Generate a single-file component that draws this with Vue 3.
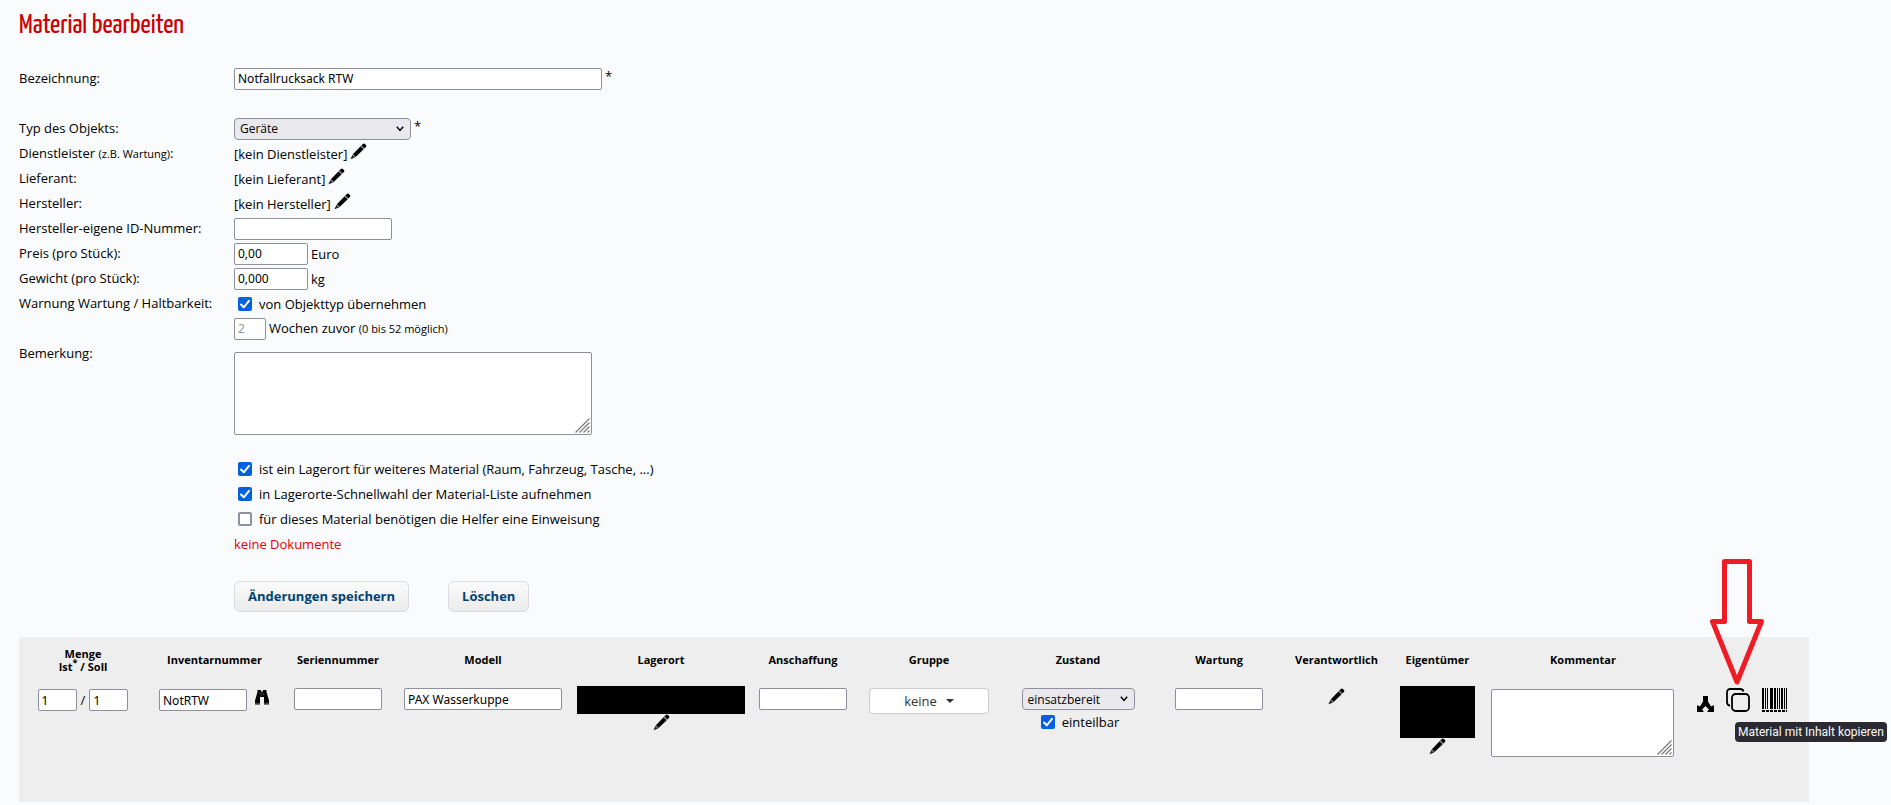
<script setup>
import { h, reactive } from 'vue'

const form = reactive({
  name: 'Notfallrucksack RTW',
  type: 'Geräte',
  manufacturerId: '',
  price: '0,00',
  weight: '0,000',
  inheritWarning: true,
  weeks: '2',
  remark: '',
  isStorage: true,
  quickSelect: true,
  needsBriefing: false
})

const item = reactive({
  actual: '1',
  target: '1',
  inventory: 'NotRTW',
  serial: '',
  model: 'PAX Wasserkuppe',
  purchase: '',
  state: 'einsatzbereit',
  assignable: true,
  maintenance: '',
  comment: ''
})

const columns = [
  { key: 'qty', label: 'Menge', width: 128 },
  { key: 'inv', label: 'Inventarnummer', width: 135 },
  { key: 'ser', label: 'Seriennummer', width: 112 },
  { key: 'mod', label: 'Modell', width: 178 },
  { key: 'loc', label: 'Lagerort', width: 178 },
  { key: 'buy', label: 'Anschaffung', width: 106 },
  { key: 'grp', label: 'Gruppe', width: 146 },
  { key: 'sta', label: 'Zustand', width: 152 },
  { key: 'mnt', label: 'Wartung', width: 130 },
  { key: 'rsp', label: 'Verantwortlich', width: 105 },
  { key: 'own', label: 'Eigentümer', width: 97 },
  { key: 'com', label: 'Kommentar', width: 194 },
  { key: 'act', label: '', width: 129 }
]
const total = columns.reduce((sum, c) => sum + c.width, 0)
const share = (c) => ({ width: (c.width / total) * 100 + '%' })

const Pencil = () =>
  h('svg', { width: 17, height: 17, viewBox: '0 0 17 17', 'aria-hidden': 'true' }, [
    h('path', { d: 'M11.2 2.6 13.2 0.8Q14 0.2 14.8 0.9L16 2.1Q16.8 3 16.1 3.7L14.4 5.6Z', fill: '#000' }),
    h('path', { d: 'M10.6 3.2 13.7 6.3 5.6 14 2.9 11.3Z', fill: '#000' }),
    h('path', { d: 'M2.4 11.9 5 14.5 1.2 16.1Q0.3 16.4 0.7 15.5Z', fill: '#222' }),
    h('path', { d: 'M11 2.8 14.1 5.9M2.6 11.6 5.3 14.2', stroke: '#777', 'stroke-width': 0.8 })
  ])

const Grip = () =>
  h('svg', { class: 'grip', width: 15, height: 15, viewBox: '0 0 15 15', 'aria-hidden': 'true' }, [
    h('path', { d: 'M0.5 14.5 14.5 0.5M4.5 14.5 14.5 4.5M8.5 14.5 14.5 8.5M12.5 14.5 14.5 12.5', stroke: '#777', 'stroke-width': 1.2 })
  ])
</script>

<template>
  <main class="page">
    <h1>Material bearbeiten</h1>

    <form class="form" @submit.prevent>
      <label class="label" for="name">Bezeichnung:</label>
      <div class="value gap-row">
        <input id="name" v-model="form.name" class="field name" type="text" />
        <span class="star">*</span>
      </div>

      <label class="label" for="type">Typ des Objekts:</label>
      <div class="value">
        <select id="type" v-model="form.type" class="select type">
          <option>Geräte</option>
        </select>
        <span class="star">*</span>
      </div>

      <span class="label">Dienstleister <small>(z.B. Wartung)</small>:</span>
      <div class="value"><span>[kein Dienstleister]</span><button class="icon" type="button" aria-label="Dienstleister bearbeiten"><Pencil /></button></div>

      <span class="label">Lieferant:</span>
      <div class="value"><span>[kein Lieferant]</span><button class="icon" type="button" aria-label="Lieferant bearbeiten"><Pencil /></button></div>

      <span class="label">Hersteller:</span>
      <div class="value"><span>[kein Hersteller]</span><button class="icon" type="button" aria-label="Hersteller bearbeiten"><Pencil /></button></div>

      <label class="label" for="mid">Hersteller-eigene ID-Nummer:</label>
      <div class="value"><input id="mid" v-model="form.manufacturerId" class="field mid" type="text" /></div>

      <label class="label" for="price">Preis (pro Stück):</label>
      <div class="value"><input id="price" v-model="form.price" class="field num" type="text" /><span>Euro</span></div>

      <label class="label" for="weight">Gewicht (pro Stück):</label>
      <div class="value"><input id="weight" v-model="form.weight" class="field num" type="text" /><span>kg</span></div>

      <span class="label">Warnung Wartung / Haltbarkeit:</span>
      <label class="value check"><input v-model="form.inheritWarning" type="checkbox" />von Objekttyp übernehmen</label>

      <div class="value second">
        <input id="weeks" v-model="form.weeks" class="field weeks" type="text" disabled />
        <label for="weeks">Wochen zuvor <small>(0 bis 52 möglich)</small></label>
      </div>

      <label class="label" for="remark">Bemerkung:</label>
      <div class="area remark"><textarea id="remark" v-model="form.remark"></textarea><Grip /></div>

      <label class="value check second"><input v-model="form.isStorage" type="checkbox" />ist ein Lagerort für weiteres Material (Raum, Fahrzeug, Tasche, ...)</label>
      <label class="value check second"><input v-model="form.quickSelect" type="checkbox" />in Lagerorte-Schnellwahl der Material-Liste aufnehmen</label>
      <label class="value check second"><input v-model="form.needsBriefing" type="checkbox" />für dieses Material benötigen die Helfer eine Einweisung</label>
      <div class="value second none">keine Dokumente</div>

      <div class="second actions">
        <button class="btn" type="submit">Änderungen speichern</button>
        <button class="btn" type="button">Löschen</button>
      </div>
    </form>

    <table class="items">
      <colgroup>
        <col v-for="c in columns" :key="c.key" :style="share(c)" />
      </colgroup>
      <thead>
        <tr>
          <th v-for="c in columns" :key="c.key" scope="col">
            {{ c.label }}
            <template v-if="c.key === 'qty'"><br />Ist<sup>*</sup> / Soll</template>
          </th>
        </tr>
      </thead>
      <tbody>
        <tr>
          <td>
            <div class="line qty">
              <input v-model="item.actual" class="field count" type="text" aria-label="Menge Ist" />
              <span>/</span>
              <input v-model="item.target" class="field count" type="text" aria-label="Menge Soll" />
            </div>
          </td>
          <td>
            <div class="line inv">
              <input v-model="item.inventory" class="field short" type="text" aria-label="Inventarnummer" />
              <button class="icon" type="button" aria-label="Suchen">
                <svg width="16" height="16" viewBox="0 0 16 16" aria-hidden="true">
                  <path d="M3.5 1H7V2.5H9V1H12.500V3L15 11.500V15.500H10V8H6V15.500H1V11.500L3.500 3Z" fill="#000" />
                  <path d="M6 4V6M9.500 4V6M7.800 3V7" stroke="#555" stroke-width=".7" />
                  <path d="M1 14.300H6M10 14.300H15" stroke="#666" stroke-width=".8" />
                </svg>
              </button>
            </div>
          </td>
          <td><input v-model="item.serial" class="field short" type="text" aria-label="Seriennummer" /></td>
          <td><input v-model="item.model" class="field model" type="text" aria-label="Modell" /></td>
          <td class="stack">
            <div class="masked location"></div>
            <button class="icon" type="button" aria-label="Lagerort bearbeiten"><Pencil /></button>
          </td>
          <td><input v-model="item.purchase" class="field short" type="text" aria-label="Anschaffung" /></td>
          <td>
            <button class="group" type="button">keine <span class="caret"></span></button>
          </td>
          <td>
            <select v-model="item.state" class="select state" aria-label="Zustand">
              <option>einsatzbereit</option>
            </select>
            <label class="check assign"><input v-model="item.assignable" type="checkbox" />einteilbar</label>
          </td>
          <td><input v-model="item.maintenance" class="field short" type="text" aria-label="Wartung" /></td>
          <td><button class="icon" type="button" aria-label="Verantwortlich bearbeiten"><Pencil /></button></td>
          <td class="stack">
            <div class="masked owner"></div>
            <button class="icon" type="button" aria-label="Eigentümer bearbeiten"><Pencil /></button>
          </td>
          <td>
            <div class="area comment"><textarea v-model="item.comment" aria-label="Kommentar"></textarea><Grip /></div>
          </td>
          <td>
            <div class="tools">
              <button class="icon" type="button" aria-label="Aufteilen">
                <svg width="17" height="16" viewBox="0 0 17 16" aria-hidden="true">
                  <path d="M6 0H11V5.500L14 10.500L16 9.500H17V16H10.500V15L12 13.500L8.500 10L5 13.500L6.500 15V16H0V9.500H1L3 10.500L6 5.500Z" fill="#000" />
                </svg>
              </button>
              <div class="copy">
                <button class="icon" type="button" aria-label="Material mit Inhalt kopieren">
                  <svg width="24" height="24" viewBox="0 0 24 24" fill="none" stroke="#000" stroke-width="1.8" aria-hidden="true">
                    <rect x="6" y="6" width="17" height="17" rx="3.500" />
                    <path d="M4 17.500Q1 17.500 1 14V4.500Q1 1 4.500 1H14Q17 1 17.500 3.500" />
                  </svg>
                </button>
                <svg class="arrow" width="56" height="128" viewBox="0 0 56 128" aria-hidden="true">
                  <path d="M15.500 3.500H40.500V63.500H52.500L28 124L3.500 63.500H15.500Z" fill="none" stroke="#ee1c25" stroke-width="5" stroke-linejoin="round" />
                </svg>
                <span class="tip" role="tooltip">Material mit Inhalt kopieren</span>
              </div>
              <button class="icon" type="button" aria-label="Barcode">
                <svg width="25" height="24" viewBox="0 0 25 24" aria-hidden="true">
                  <path d="M0 0H2V21H0ZM3 0H4V21H3ZM5 0H6V21H5ZM8 0H11V21H8ZM12 0H14V21H12ZM15 0H16V21H15ZM17 0H18V21H17ZM19 0H21V21H19ZM22 0H23V21H22ZM24 0H25V21H24Z" fill="#000" />
                  <path d="M0 23H25" stroke="#000" stroke-width="2" stroke-dasharray="3 1" />
                </svg>
              </button>
            </div>
          </td>
        </tr>
      </tbody>
    </table>
  </main>
</template>

<style>
body {
  background: #f9fbfd;
}
</style>

<style scoped>
.page {
  padding: 10px 82px 3px 19px;
  font: 13px/18px "Open Sans", "Noto Sans", sans-serif;
  color: #000;
}
h1 {
  margin: 0 0 24px;
  font: 400 28px/32px "Liberation Sans Narrow", "Yanone Kaffeesatz", "Liberation Sans", sans-serif;
  color: #c00;
}
small {
  font-size: 11px;
}
input,
select,
textarea,
button {
  box-sizing: border-box;
  margin: 0;
  font-family: inherit;
  color: inherit;
}
.form {
  display: grid;
  grid-template-columns: 215px 1fr;
  grid-auto-rows: minmax(25px, auto);
}
.label {
  padding-top: 3px;
}
.value {
  display: flex;
  align-items: center;
  gap: 3px;
  height: 25px;
}
.gap-row {
  margin-bottom: 25px;
}
.second {
  grid-column: 2;
}
.star {
  align-self: flex-start;
  padding-top: 1px;
}
.none {
  color: #e60000;
}
.field,
.area textarea {
  border: 1px solid #8f8f9d;
  border-radius: 2px;
  background: #fff;
}
.field {
  height: 22px;
  padding: 0 3px;
  font-family: "Noto Sans", "Open Sans", sans-serif;
  font-size: 12px;
}
.field:disabled {
  color: #999;
}
.name {
  width: 368px;
}
.mid {
  width: 158px;
}
.num {
  width: 74px;
}
.weeks {
  width: 32px;
}
.count {
  width: 39px;
}
.short {
  width: 88px;
}
.model {
  width: 158px;
}
.select {
  appearance: none;
  height: 22px;
  padding: 0 22px 0 5px;
  border: 1px solid #8f8f9d;
  border-radius: 4px;
  background: #e9e9ed url("data:image/svg+xml,%3Csvg xmlns='http://www.w3.org/2000/svg' width='8' height='6' viewBox='0 0 8 6'%3E%3Cpath d='M.8 .8 4 4.400 7.200 .8' fill='none' stroke='%23000' stroke-width='1.500'/%3E%3C/svg%3E") no-repeat right 6px center;
  font-size: 12px;
}
.type {
  width: 177px;
}
.state {
  display: block;
  width: 113px;
  margin: 0 auto;
}
.check {
  gap: 7px;
}
.check input {
  appearance: none;
  width: 14px;
  height: 14px;
  border: 2px solid #8f8f9d;
  border-radius: 2px;
  background: #fff;
}
.value.check input {
  margin-left: 4px;
}
.check input:checked {
  border: 0;
  background: #0060df url("data:image/svg+xml,%3Csvg xmlns='http://www.w3.org/2000/svg' width='14' height='14' viewBox='0 0 14 14'%3E%3Cpath d='M3 7.500 5.800 10.300 11 3.800' fill='none' stroke='%23fff' stroke-width='2' stroke-linecap='round' stroke-linejoin='round'/%3E%3C/svg%3E");
}
.icon {
  display: inline-flex;
  padding: 0;
  border: 0;
  background: none;
  cursor: pointer;
}
.value .icon {
  align-self: flex-start;
  padding-top: 2px;
}
.area {
  position: relative;
}
.area textarea {
  display: block;
  width: 100%;
  height: 100%;
  resize: none;
}
.grip {
  position: absolute;
  right: 2px;
  bottom: 2px;
  pointer-events: none;
}
.remark {
  width: 358px;
  height: 83px;
  margin: 11px 0 21px;
}
.actions {
  display: flex;
  gap: 39px;
  padding: 25px 0;
}
.btn {
  height: 31px;
  padding: 0 13px 2px;
  border: 1px solid #d9dcde;
  border-radius: 6px;
  background: linear-gradient(#fbfbfb, #ebebeb);
  font-size: 13px;
  font-weight: 700;
  color: #004276;
}
.items {
  width: 100%;
  table-layout: fixed;
  border-collapse: collapse;
  background: #eee;
}
th {
  height: 45px;
  padding: 0;
  font-size: 11px;
  line-height: 13px;
}
sup {
  line-height: 0;
}
td {
  height: 114px;
  padding: 6px 0 0;
  vertical-align: top;
  text-align: center;
}
td > .field {
  display: block;
  margin: 0 auto;
}
.line {
  display: flex;
  align-items: center;
  justify-content: center;
  padding-top: 1px;
}
.qty {
  gap: 4px;
}
.inv {
  gap: 7px;
}
.inv .icon {
  align-self: flex-start;
}
.stack {
  padding-top: 4px;
  line-height: 16px;
}
.stack .icon {
  vertical-align: top;
}
.masked {
  margin: 0 auto;
  background: #000;
}
.location {
  width: 168px;
  height: 28px;
}
.owner {
  width: 75px;
  height: 52px;
}
.group {
  display: inline-flex;
  align-items: center;
  justify-content: center;
  gap: 9px;
  width: 120px;
  height: 26px;
  border: 1px solid #ccc;
  border-radius: 4px;
  background: #fff;
  font-size: 13px;
  color: #333;
}
.caret {
  border: 4px solid transparent;
  border-top-color: #333;
  border-bottom: 0;
}
.assign {
  display: flex;
  align-items: center;
  justify-content: center;
  padding: 3px 0 0 4px;
}
.comment {
  width: 183px;
  height: 68px;
  margin: 1px auto 0;
}
.tools {
  display: flex;
  align-items: flex-end;
  justify-content: center;
  gap: 12px;
  padding-right: 5px;
}
.copy {
  position: relative;
  display: flex;
}
.arrow {
  position: absolute;
  left: -17px;
  bottom: 26px;
  pointer-events: none;
}
.tip {
  position: absolute;
  top: 34px;
  left: 9px;
  padding: 1px 3px;
  border-radius: 4px;
  background: #2b2a33;
  font: 12px/18px Roboto, "Open Sans", sans-serif;
  white-space: nowrap;
  color: #fbfbfe;
}
</style>
